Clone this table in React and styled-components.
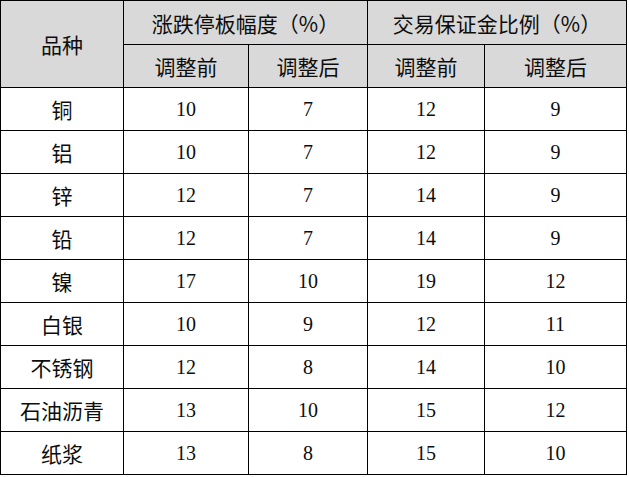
import React from "react";
import styled, { createGlobalStyle } from "styled-components";

const GlobalStyle = createGlobalStyle`
  html, body {
    margin: 0;
    padding: 0;
    background: #fff;
  }
`;

const Grid = styled.div`
  display: grid;
  grid-template-columns: 122px 124px 118px 116px 141px;
  grid-template-rows: 43px 42px repeat(9, 42px);
  gap: 1px;
  padding: 1px;
  width: 627px;
  box-sizing: border-box;
  background: #000;
`;

const Cell = styled.div`
  display: flex;
  align-items: center;
  justify-content: center;
  background: ${(p) => (p.$head ? "#d9d9d9" : "#fff")};
  color: #0d0d0d;
  font-size: ${(p) => (p.$num ? "20px" : "21px")};
  font-family: ${(p) =>
    p.$num
      ? '"Liberation Serif", "Times New Roman", serif'
      : '"Noto Sans CJK SC", "Noto Sans", sans-serif'};
  grid-column: ${(p) => (p.$colSpan ? `span ${p.$colSpan}` : "auto")};
  grid-row: ${(p) => (p.$rowSpan ? `span ${p.$rowSpan}` : "auto")};
  padding-top: ${(p) => (p.$num ? "1px" : "0")};
`;

const rows = [
  ["铜", 10, 7, 12, 9],
  ["铝", 10, 7, 12, 9],
  ["锌", 12, 7, 14, 9],
  ["铅", 12, 7, 14, 9],
  ["镍", 17, 10, 19, 12],
  ["白银", 10, 9, 12, 11],
  ["不锈钢", 12, 8, 14, 10],
  ["石油沥青", 13, 10, 15, 12],
  ["纸浆", 13, 8, 15, 10],
];

export default function App() {
  return (
    <>
      <GlobalStyle />
      <Grid>
        <Cell $head $rowSpan={2}>品种</Cell>
        <Cell $head $colSpan={2}>涨跌停板幅度（%）</Cell>
        <Cell $head $colSpan={2}>交易保证金比例（%）</Cell>
        <Cell $head>调整前</Cell>
        <Cell $head>调整后</Cell>
        <Cell $head>调整前</Cell>
        <Cell $head>调整后</Cell>
        {rows.map(([name, ...vals]) => (
          <React.Fragment key={name}>
            <Cell>{name}</Cell>
            {vals.map((v, i) => (
              <Cell $num key={i}>{v}</Cell>
            ))}
          </React.Fragment>
        ))}
      </Grid>
    </>
  );
}
